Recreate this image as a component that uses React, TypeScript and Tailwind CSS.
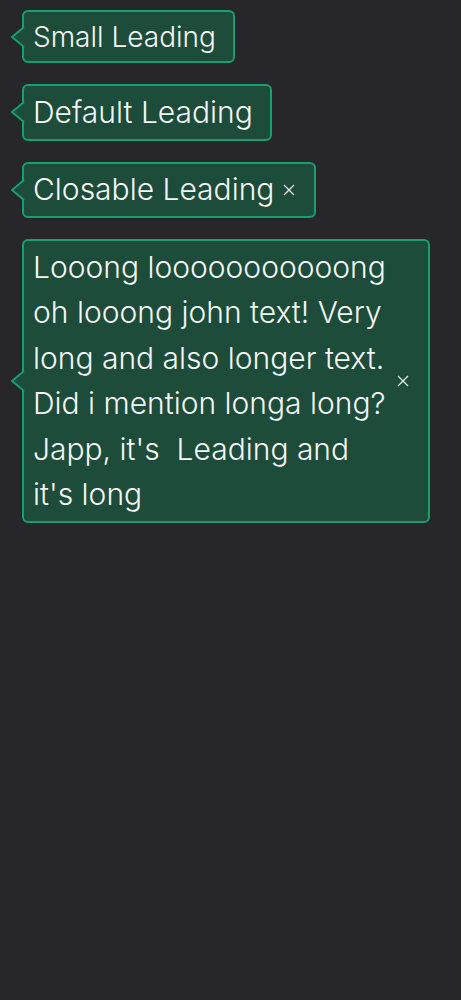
import React from "react"

function Notch() {
  return (
    <svg
      className="absolute left-[-14px] top-1/2 -translate-y-1/2"
      width="16"
      height="22"
      viewBox="0 0 16 22"
    >
      <polygon points="16,1 14,1 2,11 14,21 16,21" fill="#1d4c3a" />
      <polyline points="14,1 2,11 14,21" fill="none" stroke="#16a06d" strokeWidth="2" strokeLinejoin="round" />
    </svg>
  )
}

function Close() {
  return (
    <svg width="12" height="12" viewBox="0 0 12 12" className="shrink-0">
      <path d="M1 1 L11 11 M11 1 L1 11" stroke="#e8ece9" strokeWidth="1.3" />
    </svg>
  )
}

function Tag({
  children,
  closable = false,
  small = false,
  className = "",
}: {
  children: React.ReactNode
  closable?: boolean
  small?: boolean
  className?: string
}) {
  return (
    <div
      className={
        "relative flex items-center gap-[9px] rounded-[6px] border-2 border-[#16a06d] bg-[#1d4c3a] py-[3.5px] pl-[9px] text-[#f4f6f5] " +
        (small ? "text-[28px] leading-[42px] " : "text-[30px] leading-[45.5px] ") +
        (closable ? "pr-[19px] " : "pr-[17px] ") +
        className
      }
    >
      <Notch />
      <div className="min-w-0 flex-1 whitespace-pre-wrap">{children}</div>
      {closable && <Close />}
    </div>
  )
}

export default function App() {
  return (
    <div
      className="min-h-screen bg-[#27262b] pl-[22px] pt-[10px] font-light"
      style={{ fontFamily: "Inter, 'Noto Sans', sans-serif" }}
    >
      <div className="flex flex-col items-start gap-[21px]">
        <Tag small>Small Leading</Tag>
        <Tag>Default Leading</Tag>
        <Tag closable>Closable Leading</Tag>
        <Tag closable className="w-[408px]">
          Looong looooooooooong oh looong john text! Very long and also longer text. Did i mention longa long? Japp, it's  Leading and it's long
        </Tag>
      </div>
    </div>
  )
}
